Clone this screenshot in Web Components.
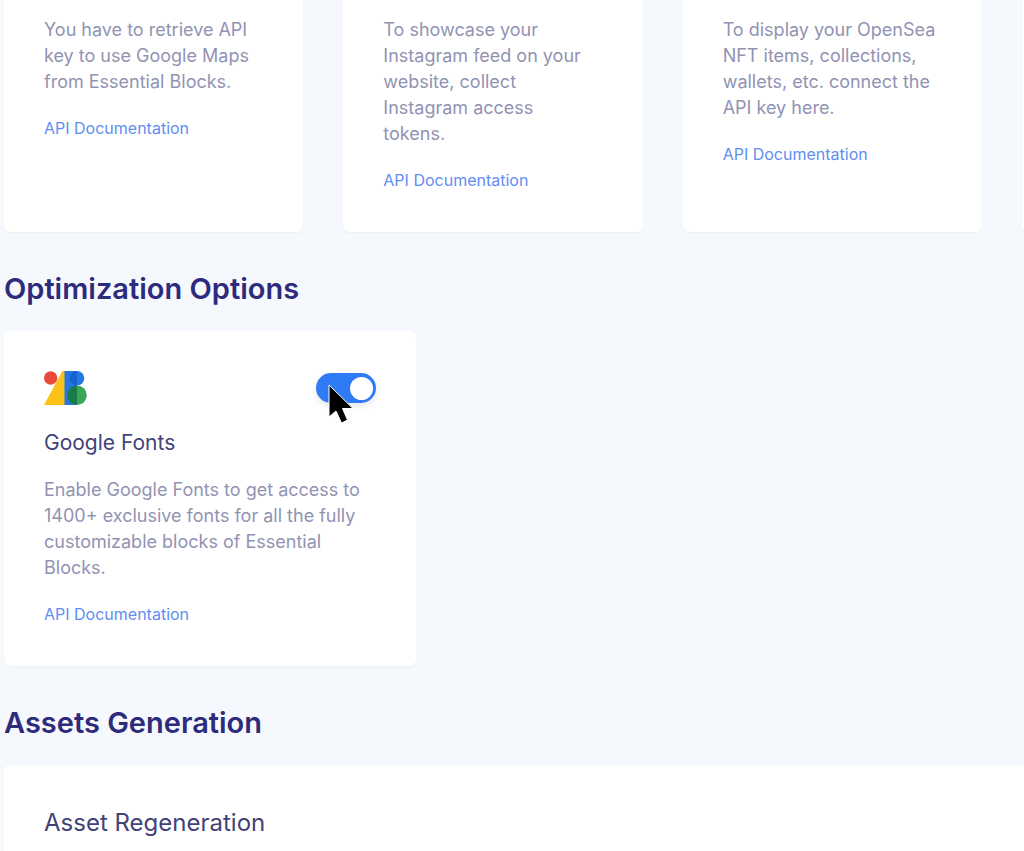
<!DOCTYPE html>
<html lang="en">
<head>
<meta charset="utf-8">
<meta name="viewport" content="width=device-width, initial-scale=1">
<title>Essential Blocks</title>
<style>
body {
  margin: 0;
  background: #f5f8fc;
  font-family: Inter, "Liberation Sans", sans-serif;
}
</style>
</head>
<body>
<options-page>
  <card-row>
    <option-card cut>
      You have to retrieve API key to use Google Maps from Essential Blocks.
      <doc-link slot="link"></doc-link>
    </option-card>
    <option-card cut>
      To showcase your Instagram feed on your website, collect Instagram access<br>tokens.
      <doc-link slot="link"></doc-link>
    </option-card>
    <option-card cut>
      To display your OpenSea NFT items, collections, wallets, etc. connect the API key here.
      <doc-link slot="link"></doc-link>
    </option-card>
    <option-card cut></option-card>
  </card-row>

  <page-section>
    <span slot="title">Optimization Options</span>
    <option-card class="single">
      <fonts-logo slot="icon"></fonts-logo>
      <toggle-switch slot="control" label="Google Fonts"></toggle-switch>
      <span slot="title">Google Fonts</span>
      Enable Google Fonts to get access to 1400+ exclusive fonts for all the fully customizable blocks of Essential Blocks.
      <doc-link slot="link"></doc-link>
    </option-card>
  </page-section>

  <page-section fill>
    <span slot="title">Assets Generation</span>
    <wide-card>Asset Regeneration</wide-card>
  </page-section>
</options-page>

<script>
function define(name, html, setup) {
  const template = document.createElement("template");
  template.innerHTML = html;
  customElements.define(name, class extends HTMLElement {
    constructor() {
      super();
      this.attachShadow({ mode: "open" }).append(template.content.cloneNode(true));
    }
    connectedCallback() {
      if (setup) setup(this, this.shadowRoot);
    }
  });
}

define("options-page", `
<style>
:host {
  display: flex;
  flex-direction: column;
  box-sizing: border-box;
  min-height: 100vh;
  padding-left: 4px;
  overflow: hidden;
}
</style>
<slot></slot>
`);

// the fourth card runs past the right edge
define("card-row", `
<style>
:host {
  display: grid;
  grid-auto-flow: column;
  grid-auto-columns: calc((100% - 122px) / 3);
  gap: 40px;
}
</style>
<slot></slot>
`);

define("page-section", `
<style>
:host {
  display: flex;
  flex-direction: column;
  padding-top: 37px;
}
:host([fill]) {
  flex: 1;
}
h2 {
  margin: 0 0 22px;
  font-size: 29px;
  line-height: 40px;
  font-weight: 600;
  color: #2d2b7c;
}
::slotted(.single) {
  max-width: 412px;
}
</style>
<h2><slot name="title"></slot></h2>
<slot></slot>
`);

define("option-card", `
<style>
:host {
  display: flex;
  flex-direction: column;
  box-sizing: border-box;
  padding: 40px 40px 41px;
  background: #fff;
  border-radius: 6px;
  box-shadow: 0 1px 2px rgba(40, 50, 110, 0.05);
}
:host([cut]) {
  padding-top: 17px;
  border-radius: 0 0 6px 6px;
}
:host([cut]) .top,
:host([cut]) h3 {
  display: none;
}
.top {
  display: flex;
  justify-content: space-between;
  align-items: center;
}
h3 {
  margin: 24px 0 20px;
  font-size: 21px;
  line-height: 28px;
  font-weight: 400;
  color: #424279;
}
p {
  margin: 0 0 22px;
  font-size: 18px;
  line-height: 26px;
  color: #9193b3;
}
</style>
<div class="top"><slot name="icon"></slot><slot name="control"></slot></div>
<h3><slot name="title"></slot></h3>
<p><slot></slot></p>
<slot name="link"></slot>
`);

define("doc-link", `
<style>
:host {
  display: block;
  font-size: 16px;
  line-height: 22px;
}
a {
  color: #5f8df2;
  text-decoration: none;
}
</style>
<a href="#">API Documentation</a>
`);

define("wide-card", `
<style>
:host {
  display: block;
  flex: 1;
  padding: 41px 40px 0;
  background: #fff;
  border-radius: 6px 0 0 0;
}
h3 {
  margin: 0;
  font-size: 24px;
  line-height: 34px;
  font-weight: 400;
  color: #424279;
}
</style>
<h3><slot></slot></h3>
`);

define("toggle-switch", `
<style>
:host {
  display: block;
  position: relative;
  height: 30px;
}
input {
  appearance: none;
  display: flex;
  align-items: center;
  box-sizing: border-box;
  width: 60px;
  height: 30px;
  margin: 0;
  padding: 3px;
  border-radius: 15px;
  background: #c9cfe0;
}
input::before {
  content: "";
  width: 23px;
  height: 23px;
  border-radius: 50%;
  background: #fff;
}
input:checked {
  justify-content: flex-end;
  background: #2f7bf6;
  box-shadow: 0 3px 6px rgba(40, 50, 90, 0.12);
}
/* pointer lies over the switch */
svg {
  position: absolute;
  left: 11px;
  top: 10px;
  pointer-events: none;
}
</style>
<input type="checkbox" role="switch" checked>
<svg width="30" height="42" viewBox="0 0 30 42" aria-hidden="true">
  <path d="M2 2V34L9 28L14.500 40L20.500 37L15.500 25.500H26Z" fill="#000" stroke="#fff" stroke-width="1" stroke-linejoin="round"/>
</svg>
`, (host, root) => {
  root.querySelector("input").setAttribute("aria-label", host.getAttribute("label"));
});

define("fonts-logo", `
<style>
:host {
  display: block;
}
svg {
  display: block;
}
</style>
<svg width="44" height="34" viewBox="0 0 44 34" role="img" aria-label="Google Fonts logo">
  <path d="M18.500 0H21V34H0Z" fill="#fbc116"/>
  <circle cx="6.700" cy="7" r="6.700" fill="#ea4a3c"/>
  <path d="M20.500 0H33V34H20.500Z" fill="#2378e6"/>
  <path d="M33 0A7.250 7.250 0 0 0 33 14.500Z" fill="#1a62cb"/>
  <path d="M33 0A7.250 7.250 0 0 1 33 14.500Z" fill="#2378e6"/>
  <path d="M33 14.500A9.750 9.750 0 0 0 33 34Z" fill="#1a7a48"/>
  <path d="M33 14.500A9.750 9.750 0 0 1 33 34Z" fill="#3aa757"/>
</svg>
`);
</script>
</body>
</html>
